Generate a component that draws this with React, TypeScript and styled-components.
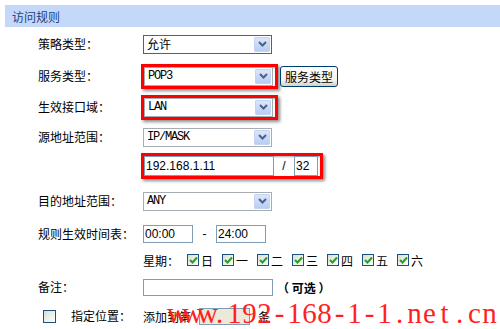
import React from "react";
import styled, { createGlobalStyle } from "styled-components";

const GlobalStyle = createGlobalStyle`
  html, body { margin: 0; padding: 0; background: #fff; }
  body {
    font-family: "Noto Sans CJK SC", "Liberation Sans", sans-serif;
    font-size: 12px;
    color: #000;
    overflow: hidden;
  }
`;

const Page = styled.div`
  position: relative;
  width: 500px;
  height: 329px;
  overflow: hidden;
`;

const Header = styled.div`
  margin: 5px 0 0 5px;
  height: 22px;
  background: #c4d8fa;
  display: flex;
  align-items: center;
  padding-left: 7px;
  color: #22407e;
  font-size: 12px;
`;

const Form = styled.div`
  display: flex;
  flex-direction: column;
  padding-left: 38px;
  padding-top: 1px;
`;

const Row = styled.div<{ $h: number }>`
  display: grid;
  grid-template-columns: 105px auto;
  align-items: center;
  height: ${(p) => p.$h}px;
`;

const Label = styled.div`
  display: flex;
  align-items: center;
  white-space: nowrap;
  line-height: 14px;
`;

const Cell = styled.div`
  display: flex;
  align-items: center;
  white-space: nowrap;
`;

const SelectBox = styled.div<{ $border?: string }>`
  box-sizing: border-box;
  width: 129px;
  height: 19px;
  border: 1px solid ${(p) => p.$border || "#a5acb2"};
  background: #fff;
  display: flex;
  align-items: center;
  justify-content: space-between;
`;

const SelectText = styled.span<{ $mono?: boolean }>`
  padding-left: 3px;
  font-family: ${(p) =>
    p.$mono
      ? `"Liberation Mono", "Courier New", monospace`
      : `"Noto Sans CJK SC", sans-serif`};
  font-size: 12px;
  letter-spacing: ${(p) => (p.$mono ? "-1.2px" : "0")};
  font-weight: 400;
  line-height: 14px;
`;

const DropBtn = styled.div`
  box-sizing: border-box;
  width: 16px;
  height: 15px;
  margin-right: 1px;
  border: 1px solid #c3d3f3;
  border-radius: 1px;
  background: linear-gradient(#dae6fb, #b8cdf4);
  display: flex;
  align-items: center;
  justify-content: center;
`;

const Highlight = styled.div`
  display: inline-flex;
  align-items: center;
  border: 3px solid #ff0000;
  margin-left: -2px;
  box-shadow: 2px 2px 3px rgba(0, 0, 0, 0.45),
    inset 1px 1px 2px rgba(0, 0, 0, 0.35);
`;

const PushButton = styled.div`
  box-sizing: border-box;
  margin-left: 2px;
  width: 58px;
  height: 21px;
  border: 1px solid #003c74;
  border-radius: 3px;
  background: linear-gradient(#ffffff, #f3f2ec 70%, #d6d0c5);
  display: flex;
  align-items: center;
  justify-content: center;
  font-size: 12px;
`;

const TextInput = styled.div<{ $w: number; $h?: number; $bg?: string }>`
  box-sizing: border-box;
  width: ${(p) => p.$w}px;
  height: ${(p) => p.$h || 18}px;
  border: 1px solid #7f9db9;
  background: ${(p) => p.$bg || "#fff"};
  display: flex;
  align-items: center;
  padding-left: 1px;
  font-family: "Liberation Sans", sans-serif;
  font-size: 12px;
`;

const Sep = styled.span<{ $w: number }>`
  display: inline-block;
  width: ${(p) => p.$w}px;
  text-align: center;
  font-family: "Liberation Sans", sans-serif;
`;

const WeekLabel = styled.span`
  width: 44px;
`;

const DayItem = styled.span`
  display: inline-flex;
  align-items: center;
  margin-right: 9px;
  gap: 2px;
`;

const Check = styled.span<{ $size?: number }>`
  box-sizing: border-box;
  width: ${(p) => p.$size || 12}px;
  height: ${(p) => p.$size || 12}px;
  border: 1px solid #1c5180;
  background: linear-gradient(135deg, #dcdcd5, #ffffff);
  display: inline-flex;
  align-items: center;
  justify-content: center;
`;

const Hint = styled.span`
  margin-left: 4px;
  font-weight: 700;
`;

const PosCheck = styled(Check)`
  margin-left: 5px;
  margin-right: 15px;
`;

const AddText = styled.span`
  margin-right: 8px;
`;

const Unit = styled.span`
  margin-left: 8px;
`;

const Watermark = styled.div`
  position: absolute;
  left: 167px;
  top: 299px;
  display: flex;
  font-family: "Liberation Serif", "DejaVu Serif", serif;
  font-weight: 400;
  font-size: 29px;
  line-height: 1;
  color: #ff1f1f;
  white-space: nowrap;
  pointer-events: none;
`;

const WChar = styled.span`
  display: inline-block;
  width: 15px;
  text-align: center;
`;

const Chevron = () => (
  <svg width="9" height="6" viewBox="0 0 9 6">
    <path d="M1 1 L4.5 4.5 L8 1" stroke="#4d6185" strokeWidth="2" fill="none" />
  </svg>
);

const Tick = () => (
  <svg width="9" height="8" viewBox="0 0 9 8">
    <path d="M1 4 L3.5 6.5 L8 1.5" stroke="#21a121" strokeWidth="2" fill="none" />
  </svg>
);

const Select = ({ value, mono, border }: { value: string; mono?: boolean; border?: string }) => (
  <SelectBox $border={border}>
    <SelectText $mono={mono}>{value}</SelectText>
    <DropBtn>
      <Chevron />
    </DropBtn>
  </SelectBox>
);

const days = ["日", "一", "二", "三", "四", "五", "六"];
const mark = "www.192-168-1-1.net.cn";

export default function App() {
  return (
    <Page>
      <GlobalStyle />
      <Header>访问规则</Header>
      <Form>
        <Row $h={32}>
          <Label>策略类型：</Label>
          <Cell>
            <Select value="允许" border="#3d62a6" />
          </Cell>
        </Row>
        <Row $h={32}>
          <Label>服务类型：</Label>
          <Cell>
            <Highlight>
              <Select value="POP3" mono />
              <Sep $w={2} />
            </Highlight>
            <PushButton>服务类型</PushButton>
          </Cell>
        </Row>
        <Row $h={30}>
          <Label>生效接口域：</Label>
          <Cell>
            <Highlight>
              <Select value="LAN" mono />
              <Sep $w={2} />
            </Highlight>
          </Cell>
        </Row>
        <Row $h={30}>
          <Label>源地址范围：</Label>
          <Cell>
            <Select value="IP/MASK" mono />
          </Cell>
        </Row>
        <Row $h={28}>
          <Label />
          <Cell>
            <Highlight>
              <TextInput $w={130} $h={20}>192.168.1.11</TextInput>
              <Sep $w={20}>/</Sep>
              <TextInput $w={24} $h={20}>32</TextInput>
              <Sep $w={2} />
            </Highlight>
          </Cell>
        </Row>
        <Row $h={42}>
          <Label>目的地址范围：</Label>
          <Cell>
            <Select value="ANY" mono />
          </Cell>
        </Row>
        <Row $h={24}>
          <Label>规则生效时间表：</Label>
          <Cell>
            <TextInput $w={50}>00:00</TextInput>
            <Sep $w={23}>-</Sep>
            <TextInput $w={50}>24:00</TextInput>
          </Cell>
        </Row>
        <Row $h={28}>
          <Label />
          <Cell>
            <WeekLabel>星期：</WeekLabel>
            {days.map((d) => (
              <DayItem key={d}>
                <Check>
                  <Tick />
                </Check>
                {d}
              </DayItem>
            ))}
          </Cell>
        </Row>
        <Row $h={26}>
          <Label>备注：</Label>
          <Cell>
            <TextInput $w={130} $h={17} />
            <Hint>（ 可选 ）</Hint>
          </Cell>
        </Row>
        <Row $h={32}>
          <Label>
            <PosCheck $size={13} />
            指定位置：
          </Label>
          <Cell>
            <AddText>添加到第</AddText>
            <TextInput $w={51} $h={17} $bg="#ece9d8" />
            <Unit>条</Unit>
          </Cell>
        </Row>
      </Form>
      <Watermark>
        {mark.split("").map((c, i) => (
          <WChar key={i}>{c}</WChar>
        ))}
      </Watermark>
    </Page>
  );
}
